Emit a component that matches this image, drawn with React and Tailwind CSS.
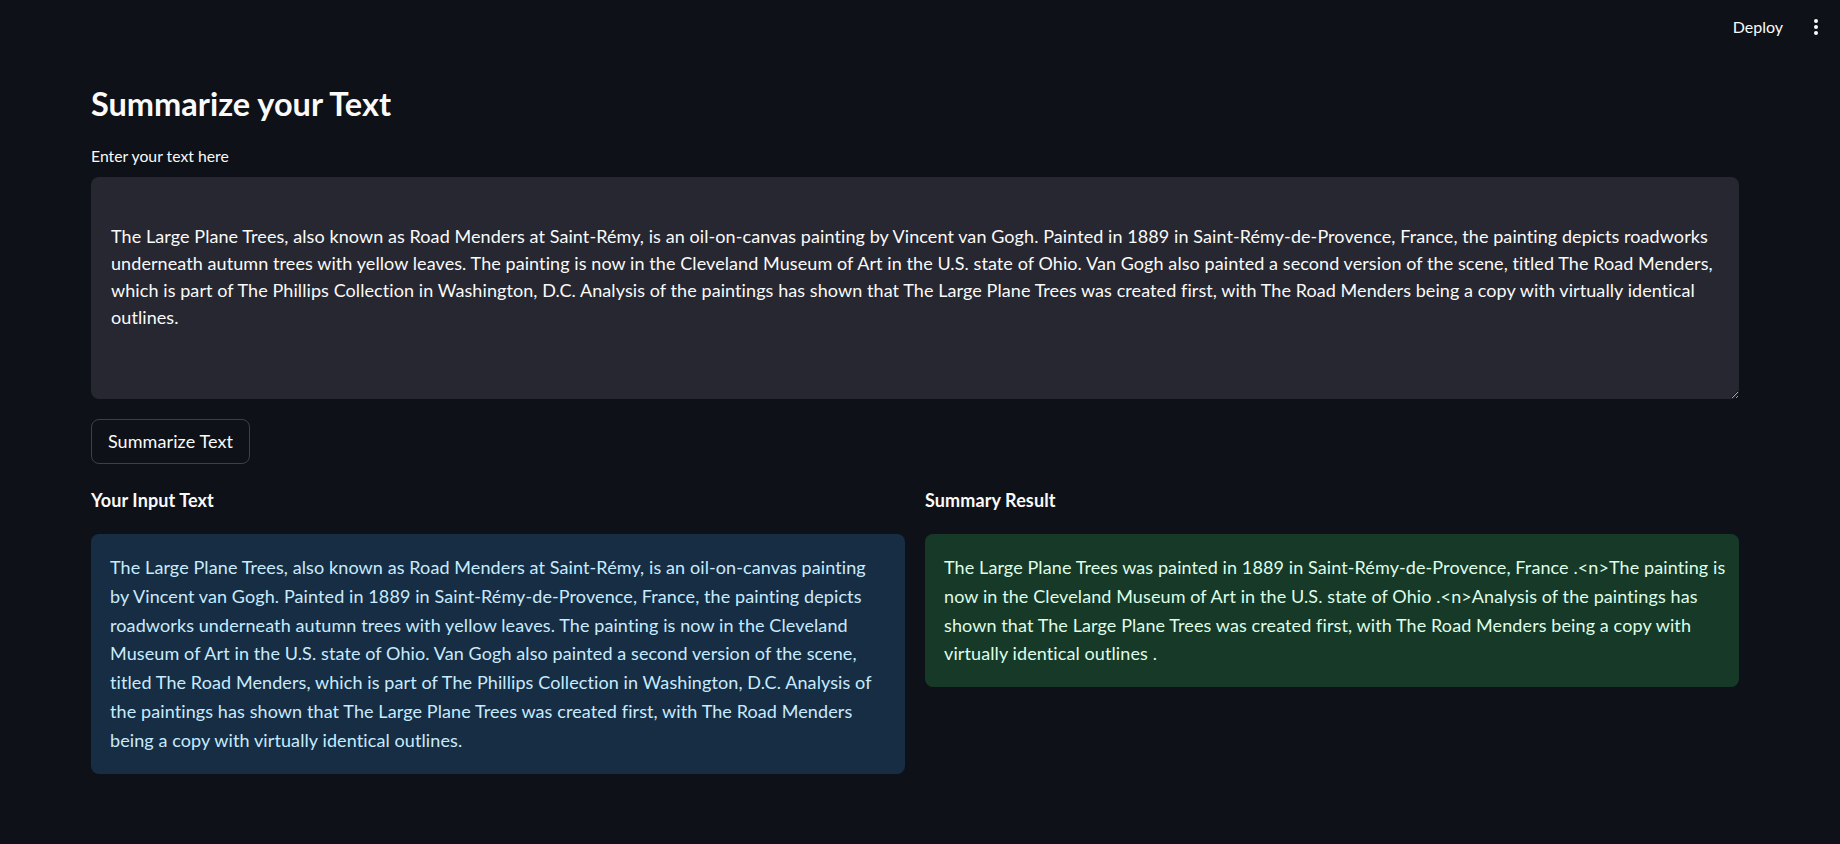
import React from "react";

const inputText =
    "The Large Plane Trees, also known as Road Menders at Saint-Rémy, is an oil-on-canvas painting by Vincent van Gogh. Painted in 1889 in Saint-Rémy-de-Provence, France, the painting depicts roadworks underneath autumn trees with yellow leaves. The painting is now in the Cleveland Museum of Art in the U.S. state of Ohio. Van Gogh also painted a second version of the scene, titled The Road Menders, which is part of The Phillips Collection in Washington, D.C. Analysis of the paintings has shown that The Large Plane Trees was created first, with The Road Menders being a copy with virtually identical outlines.";

const summaryText =
    "The Large Plane Trees was painted in 1889 in Saint-Rémy-de-Provence, France .<n>The painting is now in the Cleveland Museum of Art in the U.S. state of Ohio .<n>Analysis of the paintings has shown that The Large Plane Trees was created first, with The Road Menders being a copy with virtually identical outlines .";

export default function App() {
    return (
        <div className="min-h-[844px] bg-[#0e1117] text-[#fafafa] font-['Lato',sans-serif]">
            {/* Header */}
            <header className="h-[60px] flex items-center justify-end pr-[22px]">
                <button className="text-[16px] text-[#fafafa] mr-[31px] -mt-[7px]">Deploy</button>
                <div className="flex flex-col gap-[2px] -mt-[7px]">
                    <span className="w-[4px] h-[4px] rounded-full bg-[#fafafa]"></span>
                    <span className="w-[4px] h-[4px] rounded-full bg-[#fafafa]"></span>
                    <span className="w-[4px] h-[4px] rounded-full bg-[#fafafa]"></span>
                </div>
            </header>

            <main className="pl-[91px] pr-[101px] pb-[70px]">
                <h1 className="mt-[22px] text-[32.5px] leading-[44px] font-bold">Summarize your Text</h1>

                {/* Text input */}
                <label className="block mt-[20px] text-[15.75px] leading-[20px]">Enter your text here</label>
                <textarea
                    className="mt-[11px] block w-full h-[222px] bg-[#262730] rounded-[8px] px-[20px] py-[19px] text-[18px] leading-[27px] tracking-[0.08px] text-[#fafafa] outline-none resize-y"
                    defaultValue={"\n" + inputText}
                ></textarea>

                <button className="mt-[20px] h-[45px] w-[159px] rounded-[8px] border border-[#3d4049] text-[18px] tracking-[0.1px] text-[#fafafa]">
                    Summarize Text
                </button>

                {/* Results */}
                <div className="mt-[24px] grid grid-cols-2 gap-[20px] items-start">
                    <div>
                        <h3 className="text-[18px] leading-[24px] font-bold tracking-[0.1px]">Your Input Text</h3>
                        <div className="mt-[22px] bg-[#172d43] rounded-[8px] p-[19px] text-[18px] leading-[28.8px] tracking-[0.1px] text-[#c7ebff]">
                            {inputText}
                        </div>
                    </div>
                    <div>
                        <h3 className="text-[18px] leading-[24px] font-bold tracking-[0.1px]">Summary Result</h3>
                        <div className="mt-[22px] bg-[#173928] rounded-[8px] py-[19px] pl-[19px] pr-[12px] text-[18px] leading-[28.8px] tracking-[0.1px] text-[#dffde9]">
                            {summaryText}
                        </div>
                    </div>
                </div>
            </main>
        </div>
    );
}
